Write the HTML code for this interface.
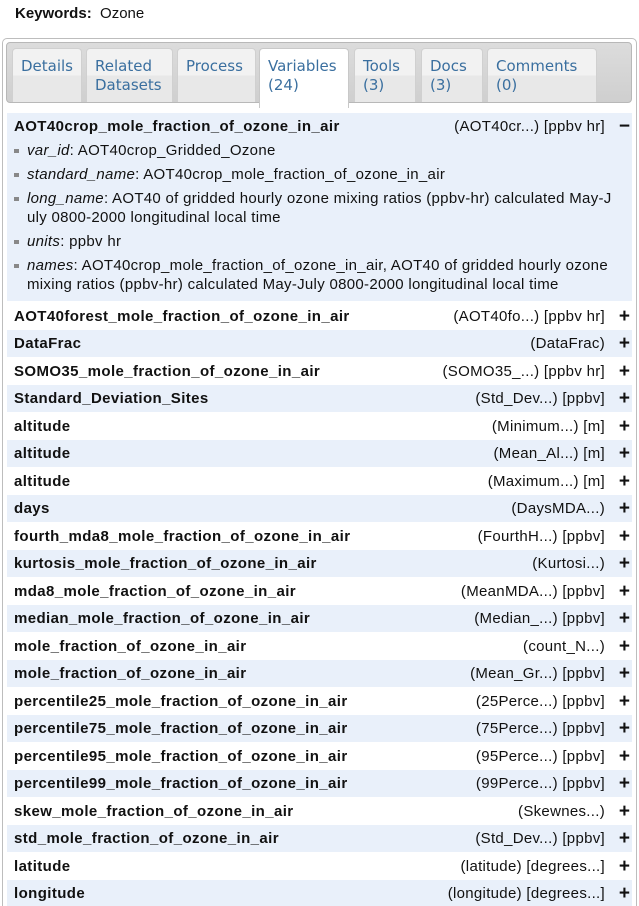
<!DOCTYPE html>
<html><head><meta charset="utf-8"><style>
*{margin:0;padding:0;box-sizing:border-box}
html,body{width:639px;height:906px;overflow:hidden}
body{background:#fff;font-family:"Liberation Sans",Arial,sans-serif;color:#111;position:relative}
.kw{position:absolute;left:15px;top:5px;font-size:15px}
.panel{position:absolute;left:2px;top:38px;width:635px;height:900px;border:1px solid #bdbdbd;border-radius:5px}
.bar{position:absolute;left:6px;top:42px;width:626px;height:61px;background:linear-gradient(#dcdcdc,#cfcfcf);border:1px solid #b8b8b8;border-radius:4px}
.tab{position:absolute;top:48px;height:54px;background:linear-gradient(#f2f2f2 50%,#e8e8e8 50%);border:1px solid #d0d0d0;border-bottom:none;border-radius:4px 4px 0 0;font-family:"DejaVu Sans",sans-serif;font-size:15px;color:#3a6f9f;padding:8px 0 0 8px;line-height:19px}
.tab.on{background:#fff;color:#3a6f9f;height:60px;border-color:#c8c8c8}
.row{position:absolute;left:7px;width:625px;height:27px;font-size:15px;line-height:27px;letter-spacing:0.4px}
.row b{position:absolute;left:7px}
.row .r{position:absolute;right:27px;color:#111;letter-spacing:0.3px}
.row .p{position:absolute;right:2px;top:0;font-weight:bold;font-size:19px;letter-spacing:0}
.blue{background:#e9f0fa}
.exp{position:absolute;left:7px;top:113px;width:625px;height:188px;background:#e9f0fa}
.exp ul{position:absolute;left:20px;top:28px;width:602px;list-style:none;font-size:15px;letter-spacing:0.3px;line-height:19px}
.exp li{margin-bottom:5px;position:relative}
.exp li:before{content:"";position:absolute;left:-13px;top:8px;width:5px;height:4px;background:#888}
</style></head><body>
<div class="kw"><b>Keywords:</b>&nbsp; Ozone</div>
<div class="panel"></div>
<div class="bar"></div>
<div class="tab" style="left:12px;width:70px">Details</div>
<div class="tab" style="left:86px;width:87px">Related<br>Datasets</div>
<div class="tab" style="left:177px;width:79px">Process</div>
<div class="tab on" style="left:259px;width:90px">Variables<br>(24)</div>
<div class="tab" style="left:354px;width:62px">Tools<br>(3)</div>
<div class="tab" style="left:421px;width:62px">Docs<br>(3)</div>
<div class="tab" style="left:487px;width:110px">Comments<br>(0)</div>
<div class="exp">
<div class="row" style="left:0;top:0"><b>AOT40crop_mole_fraction_of_ozone_in_air</b><span class="r">(AOT40cr...) [ppbv hr]</span><span class="p">&minus;</span></div>
<ul>
<li><i>var_id</i>: AOT40crop_Gridded_Ozone</li>
<li><i>standard_name</i>: AOT40crop_mole_fraction_of_ozone_in_air</li>
<li><i>long_name</i>: AOT40 of gridded hourly ozone mixing ratios (ppbv-hr) calculated May-J<br>uly 0800-2000 longitudinal local time</li>
<li><i>units</i>: ppbv hr</li>
<li><i>names</i>: AOT40crop_mole_fraction_of_ozone_in_air, AOT40 of gridded hourly ozone<br>mixing ratios (ppbv-hr) calculated May-July 0800-2000 longitudinal local time</li>
</ul>
</div>
<div class="row" style="top:303px"><b>AOT40forest_mole_fraction_of_ozone_in_air</b><span class="r">(AOT40fo...) [ppbv hr]</span><span class="p">+</span></div>
<div class="row blue" style="top:330px"><b>DataFrac</b><span class="r">(DataFrac)</span><span class="p">+</span></div>
<div class="row" style="top:358px"><b>SOMO35_mole_fraction_of_ozone_in_air</b><span class="r">(SOMO35_...) [ppbv hr]</span><span class="p">+</span></div>
<div class="row blue" style="top:385px"><b>Standard_Deviation_Sites</b><span class="r">(Std_Dev...) [ppbv]</span><span class="p">+</span></div>
<div class="row" style="top:413px"><b>altitude</b><span class="r">(Minimum...) [m]</span><span class="p">+</span></div>
<div class="row blue" style="top:440px"><b>altitude</b><span class="r">(Mean_Al...) [m]</span><span class="p">+</span></div>
<div class="row" style="top:468px"><b>altitude</b><span class="r">(Maximum...) [m]</span><span class="p">+</span></div>
<div class="row blue" style="top:495px"><b>days</b><span class="r">(DaysMDA...)</span><span class="p">+</span></div>
<div class="row" style="top:523px"><b>fourth_mda8_mole_fraction_of_ozone_in_air</b><span class="r">(FourthH...) [ppbv]</span><span class="p">+</span></div>
<div class="row blue" style="top:550px"><b>kurtosis_mole_fraction_of_ozone_in_air</b><span class="r">(Kurtosi...)</span><span class="p">+</span></div>
<div class="row" style="top:578px"><b>mda8_mole_fraction_of_ozone_in_air</b><span class="r">(MeanMDA...) [ppbv]</span><span class="p">+</span></div>
<div class="row blue" style="top:605px"><b>median_mole_fraction_of_ozone_in_air</b><span class="r">(Median_...) [ppbv]</span><span class="p">+</span></div>
<div class="row" style="top:633px"><b>mole_fraction_of_ozone_in_air</b><span class="r">(count_N...)</span><span class="p">+</span></div>
<div class="row blue" style="top:660px"><b>mole_fraction_of_ozone_in_air</b><span class="r">(Mean_Gr...) [ppbv]</span><span class="p">+</span></div>
<div class="row" style="top:688px"><b>percentile25_mole_fraction_of_ozone_in_air</b><span class="r">(25Perce...) [ppbv]</span><span class="p">+</span></div>
<div class="row blue" style="top:715px"><b>percentile75_mole_fraction_of_ozone_in_air</b><span class="r">(75Perce...) [ppbv]</span><span class="p">+</span></div>
<div class="row" style="top:743px"><b>percentile95_mole_fraction_of_ozone_in_air</b><span class="r">(95Perce...) [ppbv]</span><span class="p">+</span></div>
<div class="row blue" style="top:770px"><b>percentile99_mole_fraction_of_ozone_in_air</b><span class="r">(99Perce...) [ppbv]</span><span class="p">+</span></div>
<div class="row" style="top:798px"><b>skew_mole_fraction_of_ozone_in_air</b><span class="r">(Skewnes...)</span><span class="p">+</span></div>
<div class="row blue" style="top:825px"><b>std_mole_fraction_of_ozone_in_air</b><span class="r">(Std_Dev...) [ppbv]</span><span class="p">+</span></div>
<div class="row" style="top:853px"><b>latitude</b><span class="r">(latitude) [degrees...]</span><span class="p">+</span></div>
<div class="row blue" style="top:880px"><b>longitude</b><span class="r">(longitude) [degrees...]</span><span class="p">+</span></div>
</body></html>
